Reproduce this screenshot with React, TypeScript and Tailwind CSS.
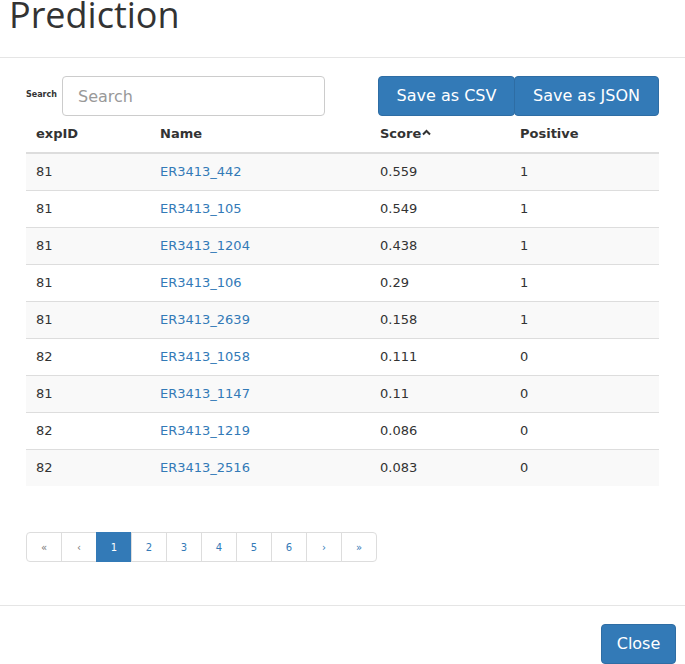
import React from "react";

const rows = [
  ["81", "ER3413_442", "0.559", "1"],
  ["81", "ER3413_105", "0.549", "1"],
  ["81", "ER3413_1204", "0.438", "1"],
  ["81", "ER3413_106", "0.29", "1"],
  ["81", "ER3413_2639", "0.158", "1"],
  ["82", "ER3413_1058", "0.111", "0"],
  ["81", "ER3413_1147", "0.11", "0"],
  ["82", "ER3413_1219", "0.086", "0"],
  ["82", "ER3413_2516", "0.083", "0"],
];

const pages = ["«", "‹", "1", "2", "3", "4", "5", "6", "›", "»"];

export default function App() {
  return (
    <div className="w-[685px] h-[664px] bg-white overflow-hidden relative" style={{ fontFamily: '"DejaVu Sans", Verdana, sans-serif' }}>
      <div className="h-[58px] border-b border-[#e5e5e5] pl-[9px]">
        <h4 className="text-[36px] leading-[29px] text-[#333]" style={{ fontFamily: '"Open Sans", sans-serif' }}>
          Prediction
        </h4>
      </div>
      <div className="px-[26px] pt-[18px] h-[547px]">
        <div className="flex items-center h-[40px]">
          <label className="text-[8px] font-bold text-[#333] mr-[5px] mt-[-3px]">Search</label>
          <input
            placeholder="Search"
            className="w-[263px] h-[40px] border border-[#ccc] rounded-[4px] px-[15px] text-[16px] placeholder:text-[#999] outline-none"
          />
          <div className="ml-auto flex">
            <button className="h-[40px] w-[137px] bg-[#337ab7] text-white text-[16px] rounded-[4px] border border-[#2e6da4]">Save as CSV</button>
            <button className="h-[40px] w-[145px] bg-[#337ab7] text-white text-[16px] rounded-[4px] border border-[#2e6da4] -ml-[1px]">Save as JSON</button>
          </div>
        </div>
        <table className="w-[633px] text-[13px] text-[#333] border-collapse">
          <thead>
            <tr className="h-[37px] border-b-2 border-[#ddd] text-left">
              <th className="pl-[10px] w-[134px] font-bold">expID</th>
              <th className="w-[220px] font-bold">Name</th>
              <th className="w-[140px] font-bold">
                <span className="inline-flex items-center">
                  Score
                  <svg width="9" height="7" viewBox="0 0 9 7" className="ml-[1px] -mt-[3px]">
                    <path d="M1 5.5 L4.5 2 L8 5.5" stroke="#333" strokeWidth="2" fill="none" />
                  </svg>
                </span>
              </th>
              <th className="font-bold">Positive</th>
            </tr>
          </thead>
          <tbody>
            {rows.map((r, i) => (
              <tr key={i} className={`h-[37px] border-t border-[#ddd] ${i % 2 === 0 ? "bg-[#f9f9f9]" : "bg-white"}`}>
                <td className="pl-[10px]">{r[0]}</td>
                <td className="text-[#337ab7]">{r[1]}</td>
                <td>{r[2]}</td>
                <td>{r[3]}</td>
              </tr>
            ))}
          </tbody>
        </table>
        <div className="mt-[46px] flex">
          {pages.map((p, i) => {
            const active = p === "1";
            const color = active ? "bg-[#337ab7] border-[#337ab7] text-white" : i < 2 ? "bg-white border-[#ddd] text-[#777]" : "bg-white border-[#ddd] text-[#337ab7]";
            return (
              <div
                key={i}
                className={`w-[36px] h-[30px] flex items-center justify-center text-[10px] border ${color} ${i > 0 ? "-ml-px" : ""} ${i === 0 ? "rounded-l-[4px]" : ""} ${i === 9 ? "rounded-r-[4px]" : ""}`}
              >
                {p}
              </div>
            );
          })}
        </div>
      </div>
      <div className="border-t border-[#e5e5e5] flex justify-end pr-[9px] pt-[18px]">
        <button className="h-[40px] w-[75px] bg-[#337ab7] text-white text-[16px] rounded-[4px] border border-[#2e6da4]">Close</button>
      </div>
    </div>
  );
}
